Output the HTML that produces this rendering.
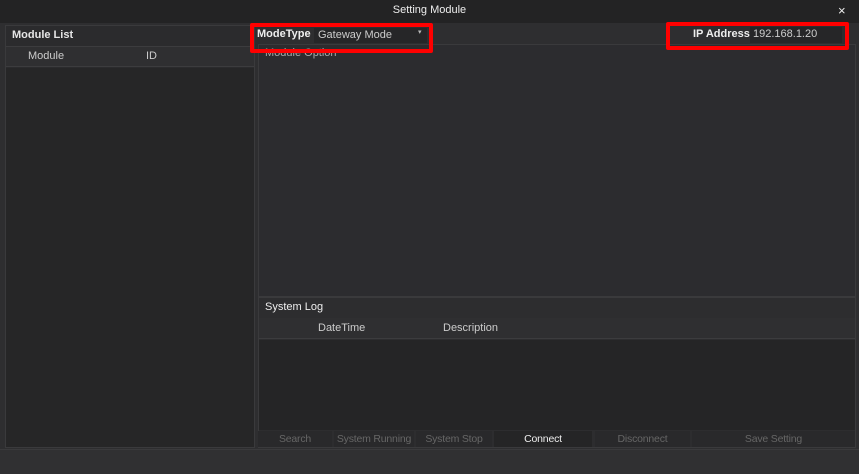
<!DOCTYPE html>
<html><head><style>
*{margin:0;padding:0;box-sizing:border-box}
body{width:859px;height:474px;background:#2e2e30;font-family:"Liberation Sans",sans-serif;color:#ddd;font-size:11px;position:relative;overflow:hidden}
.a{position:absolute;white-space:nowrap}
.b{font-size:10.5px;letter-spacing:-0.2px}
</style></head><body>
<div class="a" style="left:0;top:0;width:859px;height:23px;background:#232324"></div>
<div class="a" style="left:0;top:4px;width:859px;text-align:center;font-size:11px;color:#eee">Setting Module</div>
<div class="a" style="left:838px;top:3px;font-size:13px;color:#eee">×</div>

<div class="a" style="left:5px;top:25px;width:250px;height:423px;background:#2b2b2d;border:1px solid #3a3a3c"></div>
<div class="a" style="left:12px;top:29px;font-size:11px;font-weight:bold;color:#e6e6e6">Module List</div>
<div class="a" style="left:6px;top:46px;width:248px;height:21px;background:#2f2f31;border-top:1px solid #3c3c3e;border-bottom:1px solid #3c3c3e"></div>
<div class="a" style="left:28px;top:50px;color:#ccc">Module</div>
<div class="a" style="left:146px;top:50px;color:#ccc">ID</div>
<div class="a" style="left:6px;top:68px;width:248px;height:379px;background:#262627"></div>

<div class="a" style="left:258px;top:44px;width:598px;height:253px;background:#2c2c2f;border:1px solid #3a3a3c"></div>
<div class="a" style="left:265px;top:47px;color:#aaa">Module Option</div>

<div class="a" style="left:258px;top:297px;width:598px;height:151px;background:#2d2d2f;border:1px solid #3a3a3c"></div>
<div class="a" style="left:265px;top:301px;color:#eee">System Log</div>
<div class="a" style="left:259px;top:318px;width:596px;height:21px;background:#2f2f31;border-bottom:1px solid #3c3c3e"></div>
<div class="a" style="left:318px;top:322px;color:#ccc">DateTime</div>
<div class="a" style="left:443px;top:322px;color:#ccc">Description</div>
<div class="a" style="left:259px;top:340px;width:596px;height:90px;background:#252526"></div>

<div class="a b" style="left:258px;top:431px;width:74px;height:16px;background:#29292b;color:#666;text-align:center;line-height:16px">Search</div>
<div class="a b" style="left:334px;top:431px;width:80px;height:16px;background:#29292b;color:#666;text-align:center;line-height:16px;overflow:hidden">System Running</div>
<div class="a b" style="left:416px;top:431px;width:76px;height:16px;background:#29292b;color:#666;text-align:center;line-height:16px">System Stop</div>
<div class="a b" style="left:494px;top:431px;width:98px;height:16px;background:#252526;color:#eee;text-align:center;line-height:16px">Connect</div>
<div class="a b" style="left:595px;top:431px;width:95px;height:16px;background:#29292b;color:#666;text-align:center;line-height:16px">Disconnect</div>
<div class="a b" style="left:692px;top:431px;width:163px;height:16px;background:#29292b;color:#666;text-align:center;line-height:16px">Save Setting</div>

<div class="a" style="left:0;top:449px;width:859px;height:25px;background:#303032;border-top:1px solid #3a3a3c"></div>

<div class="a" style="left:314px;top:28px;width:113px;height:15px;background:#262628"></div>
<div class="a" style="left:257px;top:28px;font-size:11px;font-weight:bold;color:#eee">ModeType</div>
<div class="a" style="left:318px;top:29px;color:#ccc">Gateway Mode</div>
<div class="a" style="left:418px;top:28px;font-size:7px;color:#bbb">▾</div>
<div class="a" style="left:250px;top:23px;width:183px;height:30px;border:4px solid #f00;border-radius:2px"></div>

<div class="a" style="left:750px;top:27px;width:92px;height:16px;background:#262628"></div>
<div class="a" style="left:693px;top:28px;font-size:11px;font-weight:bold;color:#eee">IP Address</div>
<div class="a" style="left:753px;top:28px;color:#ccc">192.168.1.20</div>
<div class="a" style="left:666px;top:22px;width:183px;height:28px;border:4px solid #f00;border-radius:2px"></div>
</body></html>
